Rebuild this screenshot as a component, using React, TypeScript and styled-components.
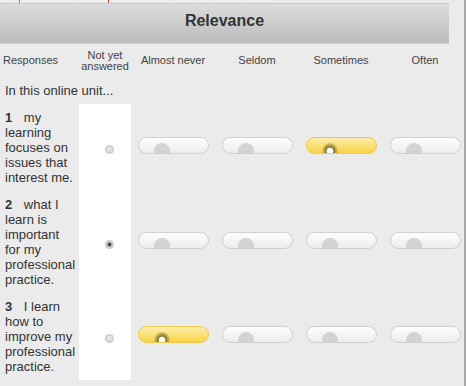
import React from 'react';
import styled, {createGlobalStyle} from 'styled-components';

const GlobalStyle = createGlobalStyle`
  html, body {
    margin: 0;
    padding: 0;
    background: #ebebeb;
    overflow: hidden;
  }
  body {
    font-family: "Liberation Sans", Arial, sans-serif;
    color: #333;
  }
`;

const Page = styled.div`
  width: 464px;
  height: 386px;
  border-right: 2px solid #a9a9a9;
  overflow: hidden;
`;

const Notice = styled.div`
  height: 3px;
  overflow: hidden;
  font-size: 12px;
  line-height: 12px;
  color: #f7f7f7;
  white-space: nowrap;

  & > span {
    display: block;
    margin-top: -9px;
  }
`;

const Caret = styled.i<{$color: string; $gap?: number}>`
  display: inline-block;
  width: 1px;
  height: 12px;
  margin: 0 2px 0 ${p => p.$gap ?? 0}px;
  vertical-align: top;
  background: ${p => p.$color};
`;

const SectionBar = styled.h2`
  margin: 0;
  width: 449px;
  box-sizing: border-box;
  height: 41px;
  padding-bottom: 5px;
  border-top: 1px solid #c9c9c9;
  border-bottom: 1px solid #d4d4d4;
  background: linear-gradient(#dcdcdc, #bcbcbc);
  font-size: 16px;
  font-weight: bold;
  line-height: 34px;
  color: #333;
  text-align: center;
`;

const Grid = styled.table`
  border-collapse: collapse;
  table-layout: fixed;
  width: 467px;
  margin-top: 4px;

  td,
  th {
    padding: 0;
  }
`;

const Col = styled.col<{$w: number}>`
  width: ${p => p.$w}px;
`;

const HeadCell = styled.th<{$left?: boolean}>`
  height: 25px;
  font-size: 11px;
  font-weight: normal;
  line-height: 11px;
  color: #444;
  vertical-align: middle;
  text-align: ${p => (p.$left ? 'left' : 'center')};
  padding-left: ${p => (p.$left ? '3px' : '0')} !important;
`;

const Intro = styled.td`
  height: 31px;
  box-sizing: border-box;
  padding: 3px 0 0 5px !important;
  font-size: 13px;
  line-height: 15px;
  vertical-align: middle;
`;

const Question = styled.td`
  padding: 6px 3px 6px 5px !important;
  font-size: 13px;
  line-height: 15px;
  vertical-align: top;
  color: #333;
`;

const Num = styled.b`
  margin-right: 8px;
`;

const Unanswered = styled.td`
  background: #fff;
  vertical-align: middle;
`;

const Choice = styled.td`
  vertical-align: middle;
`;

const Radio = styled.span<{$on?: boolean}>`
  display: block;
  box-sizing: border-box;
  width: 9px;
  height: 9px;
  margin: 4px 0 0 26px;
  border-radius: 50%;
  border: 1px solid #c4c4c4;
  background: ${p =>
    p.$on
      ? 'radial-gradient(circle, #4a4a4a 0 1.6px, #cfcfcf 2.4px, #e2e2e2 4px)'
      : 'radial-gradient(circle at 50% 40%, #ececec, #cdcdcd)'};
`;

const Pill = styled.span<{$on?: boolean}>`
  position: relative;
  display: block;
  box-sizing: border-box;
  width: 71px;
  height: 17px;
  margin: -4px auto 0;
  border-radius: 9px;
  overflow: hidden;
  border: 1px solid ${p => (p.$on ? '#efc94c' : '#cfcfcf')};
  background: ${p =>
    p.$on
      ? 'linear-gradient(#fdeeac, #f8d545)'
      : 'linear-gradient(#fefefe, #ececec)'};
`;

const Knob = styled.span<{$on?: boolean}>`
  position: absolute;
  left: 15px;
  top: 5px;
  width: 16px;
  height: 16px;
  border-radius: 50%;
  background: ${p =>
    p.$on
      ? 'radial-gradient(circle, #fff 0 3.2px, #7c7132 3.7px, #9d8d3f 5px, #c4ae55 6.5px, #e2c85c 8px)'
      : '#d3d3d3'};
`;

const options = ['Almost never', 'Seldom', 'Sometimes', 'Often'];

const questions = [
  {n: 1, text: 'my learning focuses on issues that interest me.', pick: 2},
  {n: 2, text: 'what I learn is important for my professional practice.', pick: -1},
  {n: 3, text: 'I learn how to improve my professional practice.', pick: 0},
];

export default function App() {
  return (
    <Page>
      <GlobalStyle />
      <Notice>
        <span>
          All<Caret $color="#3b9bd6" $gap={6} />questions are re<Caret $color="#b0472a" />quired and must be answered
        </span>
      </Notice>
      <SectionBar>Relevance</SectionBar>
      <Grid>
        <colgroup>
          <Col $w={79} />
          <Col $w={52} />
          <Col $w={84} />
          <Col $w={84} />
          <Col $w={84} />
          <Col $w={84} />
        </colgroup>
        <thead>
          <tr>
            <HeadCell $left>Responses</HeadCell>
            <HeadCell>Not yet answered</HeadCell>
            {options.map(o => (
              <HeadCell key={o}>{o}</HeadCell>
            ))}
          </tr>
        </thead>
        <tbody>
          <tr>
            <Intro colSpan={6}>In this online unit...</Intro>
          </tr>
          {questions.map(q => (
            <tr key={q.n}>
              <Question>
                <Num>{q.n}</Num> {q.text}
              </Question>
              <Unanswered>
                <Radio $on={q.pick === -1} />
              </Unanswered>
              {options.map((o, i) => (
                <Choice key={o}>
                  <Pill $on={q.pick === i} title={o}>
                    <Knob $on={q.pick === i} />
                  </Pill>
                </Choice>
              ))}
            </tr>
          ))}
        </tbody>
      </Grid>
    </Page>
  );
}
